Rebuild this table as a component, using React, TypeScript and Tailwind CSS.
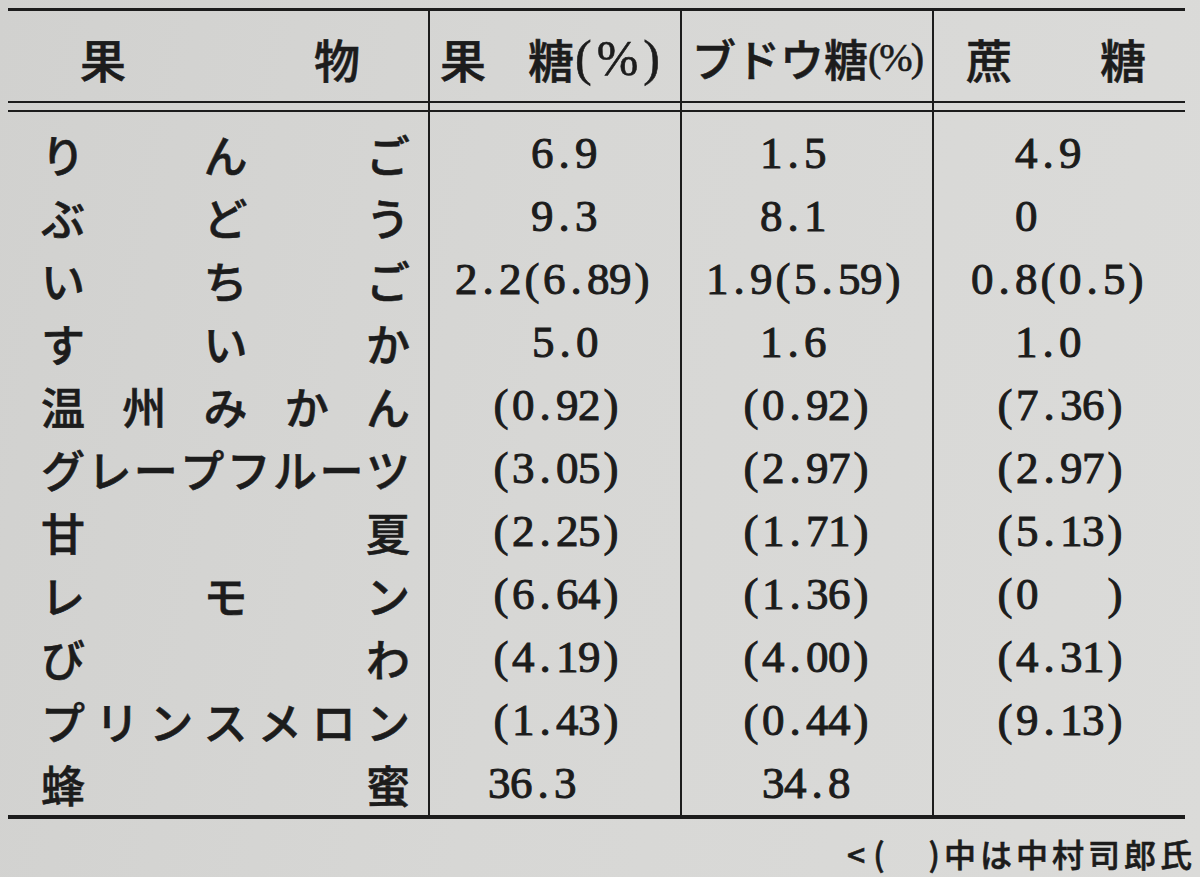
import React from "react";

type Row = { name: string[]; vals: { v: string; pl: string }[] };

const rows: Row[] = [
  { name: ["り", "ん", "ご"], vals: [{ v: "6.9", pl: "pl-[101px]" }, { v: "1.5", pl: "pl-[78px]" }, { v: "4.9", pl: "pl-[81px]" }] },
  { name: ["ぶ", "ど", "う"], vals: [{ v: "9.3", pl: "pl-[101px]" }, { v: "8.1", pl: "pl-[78px]" }, { v: "0", pl: "pl-[81px]" }] },
  { name: ["い", "ち", "ご"], vals: [{ v: "2.2(6.89)", pl: "pl-[25px]" }, { v: "1.9(5.59)", pl: "pl-[24px]" }, { v: "0.8(0.5)", pl: "pl-[37px]" }] },
  { name: ["す", "い", "か"], vals: [{ v: "5.0", pl: "pl-[102px]" }, { v: "1.6", pl: "pl-[78px]" }, { v: "1.0", pl: "pl-[81px]" }] },
  { name: ["温", "州", "み", "か", "ん"], vals: [{ v: "(0.92)", pl: "pl-[60px]" }, { v: "(0.92)", pl: "pl-[58px]" }, { v: "(7.36)", pl: "pl-[60px]" }] },
  { name: ["グ", "レ", "ー", "プ", "フ", "ル", "ー", "ツ"], vals: [{ v: "(3.05)", pl: "pl-[60px]" }, { v: "(2.97)", pl: "pl-[58px]" }, { v: "(2.97)", pl: "pl-[60px]" }] },
  { name: ["甘", "夏"], vals: [{ v: "(2.25)", pl: "pl-[60px]" }, { v: "(1.71)", pl: "pl-[58px]" }, { v: "(5.13)", pl: "pl-[60px]" }] },
  { name: ["レ", "モ", "ン"], vals: [{ v: "(6.64)", pl: "pl-[60px]" }, { v: "(1.36)", pl: "pl-[58px]" }, { v: "(0   )", pl: "pl-[60px]" }] },
  { name: ["び", "わ"], vals: [{ v: "(4.19)", pl: "pl-[60px]" }, { v: "(4.00)", pl: "pl-[58px]" }, { v: "(4.31)", pl: "pl-[60px]" }] },
  { name: ["プ", "リ", "ン", "ス", "メ", "ロ", "ン"], vals: [{ v: "(1.43)", pl: "pl-[60px]" }, { v: "(0.44)", pl: "pl-[58px]" }, { v: "(9.13)", pl: "pl-[60px]" }] },
  { name: ["蜂", "蜜"], vals: [{ v: "36.3", pl: "pl-[58px]" }, { v: "34.8", pl: "pl-[80px]" }, { v: "", pl: "pl-[60px]" }] },
];

const JP = "font-['Noto_Sans_CJK_JP',sans-serif] [-webkit-text-stroke:0.6px_#1c1c1c]";
const NUM = "font-['Liberation_Serif','Noto_Sans_CJK_JP',serif]";

function Num({ v }: { v: string }) {
  return (
    <span className={`${NUM} text-[45px] leading-none [-webkit-text-stroke:1px_#1c1c1c] flex`}>
      {v.split("").map((c, i) => (
        <span key={i} className="inline-block w-[22px] text-center">
          {c === " " ? "\u00a0" : c}
        </span>
      ))}
    </span>
  );
}

function Rule() {
  return <div className="h-[11px] border-y-2 border-[#1c1c1c]" />;
}

export default function App() {
  return (
    <div className="w-[1200px] h-[877px] overflow-hidden bg-[linear-gradient(100deg,#d1d1cf_0%,#d7d7d5_45%,#dbdbd9_100%)] text-[#1c1c1c] pt-[8px]">
      <div className="ml-[8px] w-[1177px] border-t-[3px] border-b-4 border-[#1c1c1c] grid grid-cols-[420px_252px_252px_253px]">
        {/* Column 1: fruit names */}
        <div className="flex flex-col">
          <div className={`h-[90px] pt-[4px] flex items-center justify-between pl-[72px] pr-[68px] ${JP} font-medium text-[46px] leading-none`}>
            <span>果</span>
            <span>物</span>
          </div>
          <Rule />
          <div className="pt-[10px] flex flex-col">
            {rows.map((r, i) => (
              <div key={i} className={`h-[63px] flex items-center justify-between pl-[33px] pr-[18px] ${JP} font-medium text-[44px] leading-none`}>
                {r.name.map((c, j) => (
                  <span key={j}>{c}</span>
                ))}
              </div>
            ))}
          </div>
        </div>

        {/* Column 2: 果糖 */}
        <div className="flex flex-col border-l-2 border-[#1c1c1c]">
          <div className={`h-[90px] pt-[4px] flex items-center pl-[10px] ${JP} font-medium text-[46px] leading-none`}>
            <span>果</span>
            <span className="ml-[42px]">糖</span>
            <span className={`${NUM} font-normal text-[50px] tracking-[5px] ml-[1px]`}>(%)</span>
          </div>
          <Rule />
          <div className="pt-[10px] flex flex-col">
            {rows.map((r, i) => (
              <div key={i} className={`h-[63px] flex items-center ${r.vals[0].pl}`}>
                <Num v={r.vals[0].v} />
              </div>
            ))}
          </div>
        </div>

        {/* Column 3: ブドウ糖 */}
        <div className="flex flex-col border-l-2 border-[#1c1c1c]">
          <div className={`h-[90px] pt-[4px] flex items-center pl-[10px] ${JP} font-medium text-[44px] leading-none`}>
            <span>ブドウ糖</span>
            <span className={`${NUM} font-normal text-[40px] tracking-[-2px]`}>(%)</span>
          </div>
          <Rule />
          <div className="pt-[10px] flex flex-col">
            {rows.map((r, i) => (
              <div key={i} className={`h-[63px] flex items-center ${r.vals[1].pl}`}>
                <Num v={r.vals[1].v} />
              </div>
            ))}
          </div>
        </div>

        {/* Column 4: 蔗糖 */}
        <div className="flex flex-col border-l-2 border-[#1c1c1c]">
          <div className={`h-[90px] pt-[4px] flex items-center justify-between pl-[32px] pr-[39px] ${JP} font-medium text-[46px] leading-none`}>
            <span>蔗</span>
            <span>糖</span>
          </div>
          <Rule />
          <div className="pt-[10px] flex flex-col">
            {rows.map((r, i) => (
              <div key={i} className={`h-[63px] flex items-center ${r.vals[2].pl}`}>
                <Num v={r.vals[2].v} />
              </div>
            ))}
          </div>
        </div>
      </div>

      {/* Footnote */}
      <div className={`mt-[11px] h-[46px] flex items-center justify-end pr-[4px] ${JP} font-medium text-[32px] leading-[46px] whitespace-nowrap`}>
        <span className="tracking-[8px]">{"<("}</span>
        <span className="tracking-[4px]">{"\u3000)中は中村司郎氏"}</span>
      </div>
    </div>
  );
}
